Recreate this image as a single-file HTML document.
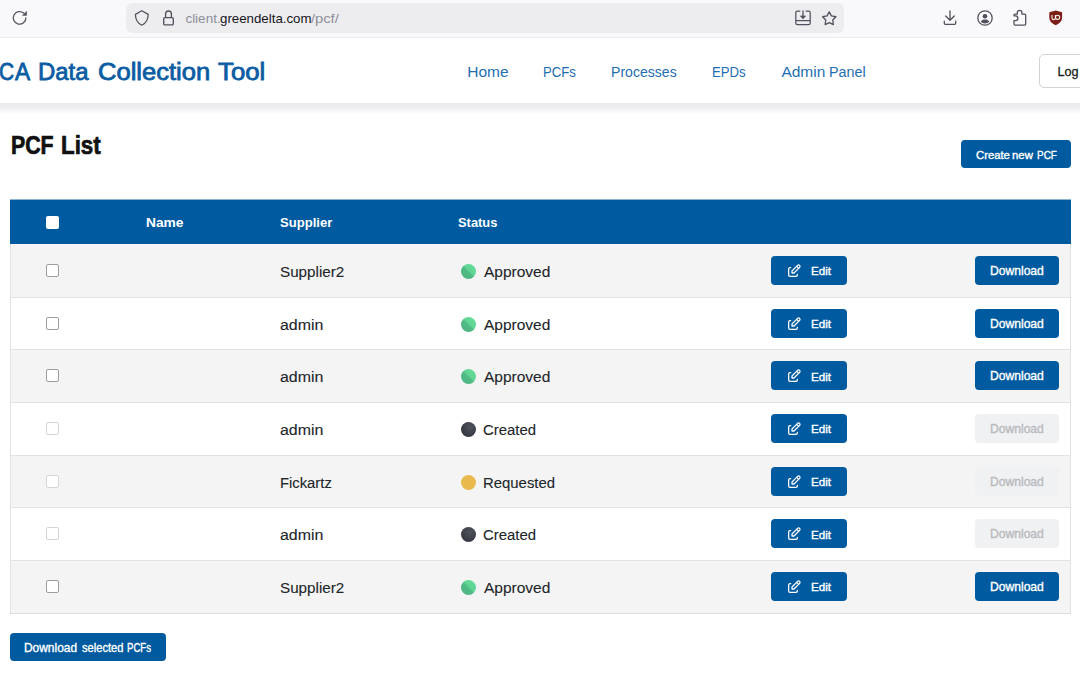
<!DOCTYPE html>
<html><head><meta charset="utf-8"><style>*{margin:0;padding:0;box-sizing:border-box}
html,body{width:1080px;height:675px;overflow:hidden;background:#fff;font-family:"Liberation Sans",sans-serif;color:#212529}
.a{position:absolute;white-space:nowrap;line-height:1}
.r{position:absolute}
svg{position:absolute;overflow:visible}
</style></head><body>
<div class="r" style="left:0;top:0;width:1080px;height:37px;background:#f9f9fb"></div>
<div class="r" style="left:0;top:37px;width:1080px;height:1px;background:#ebebee"></div>
<div class="r" style="left:126px;top:3px;width:718px;height:30px;background:#ededf0;border-radius:6px"></div>
<svg style="left:12px;top:10px" width="16" height="16" viewBox="0 0 16 16"><path d="M13.9 7.9A6.3 6.3 0 1 1 11.65 3.07" fill="none" stroke="#52525e" stroke-width="1.3" stroke-linecap="round"/><path d="M14.6 1.3L14.6 5.4L10.5 5.4Z" fill="#52525e" stroke="#52525e" stroke-width="0.5" stroke-linejoin="round"/></svg>
<svg style="left:135px;top:10px" width="14" height="16" viewBox="0 0 14 16"><path d="M6.8 0.7L13.2 4.4C13.1 9.4 10.8 13.2 6.8 15.2C2.8 13.2 0.5 9.4 0.4 4.4Z" fill="none" stroke="#52525e" stroke-width="1.25" stroke-linejoin="round"/></svg>
<svg style="left:163px;top:10px" width="12" height="16" viewBox="0 0 12 16"><path d="M2.6 7.6V3.9A2.9 2.9 0 0 1 8.4 3.9V7.6" fill="none" stroke="#52525e" stroke-width="1.35"/><rect x="0.7" y="7.6" width="9.6" height="7.3" rx="1.2" fill="none" stroke="#52525e" stroke-width="1.35"/></svg>
<div class="a" style="left:185.39px;top:12.13px;font-size:13.50px;color:#8d8d99;">client.</div>

<div class="a" style="left:220.07px;top:12.13px;font-size:13.50px;color:#15141a;transform:scaleX(0.9837);transform-origin:0 0;">greendelta.com</div>

<div class="a" style="left:311.30px;top:12.13px;font-size:13.50px;color:#8d8d99;transform:scaleX(1.0885);transform-origin:0 0;">/pcf/</div>

<svg style="left:795px;top:10px" width="16" height="16" viewBox="0 0 16 16"><path d="M5.3 1H2.4A1.6 1.6 0 0 0 0.8 2.6V13A1.6 1.6 0 0 0 2.4 14.6H13.6A1.6 1.6 0 0 0 15.2 13V2.6A1.6 1.6 0 0 0 13.6 1H10.6" fill="none" stroke="#52525e" stroke-width="1.25"/><path d="M0.8 10.6H15.2" stroke="#52525e" stroke-width="1.25"/><path d="M8 0.4V6.5" stroke="#52525e" stroke-width="1.3"/><path d="M5.3 5.9H10.7L8 8.9Z" fill="#52525e" stroke="#52525e" stroke-width="0.6" stroke-linejoin="round"/></svg>
<svg style="left:821px;top:10px" width="17" height="16" viewBox="0 0 17 16"><path d="M8.25 1.90 L10.42 5.91 L14.91 6.74 L11.77 10.04 L12.36 14.56 L8.25 12.60 L4.14 14.56 L4.73 10.04 L1.59 6.74 L6.08 5.91Z" fill="none" stroke="#52525e" stroke-width="1.3" stroke-linejoin="round"/></svg>
<svg style="left:943px;top:10px" width="15" height="16" viewBox="0 0 15 16"><path d="M7 0.8V10.2M2.7 6L7 10.3L11.3 6" fill="none" stroke="#52525e" stroke-width="1.3" stroke-linecap="round" stroke-linejoin="round"/><path d="M1.3 11.2V13.3A1 1 0 0 0 2.3 14.3H11.7A1 1 0 0 0 12.7 13.3V11.2" fill="none" stroke="#52525e" stroke-width="1.3" stroke-linecap="round"/></svg>
<svg style="left:977px;top:10px" width="16" height="16" viewBox="0 0 16 16"><circle cx="8" cy="8" r="7.2" fill="none" stroke="#52525e" stroke-width="1.3"/><circle cx="8" cy="6.2" r="2.3" fill="#52525e"/><path d="M3.8 11.8C4.6 10.2 6 9.6 8 9.6C10 9.6 11.4 10.2 12.2 11.8C11 13 9.6 13.5 8 13.5C6.4 13.5 5 13 3.8 11.8Z" fill="#52525e"/></svg>
<svg style="left:1013px;top:10px" width="14" height="16" viewBox="0 0 14 16"><path d="M2 4.1H4.3V2.6A2.3 2.3 0 0 1 8.9 2.6V4.1H11.6A1.1 1.1 0 0 1 12.7 5.2V14A1.1 1.1 0 0 1 11.6 15.1H2.1A1.1 1.1 0 0 1 1 14V10.6H2.5A2.4 2.4 0 0 0 2.5 5.8H1V5.1A1 1 0 0 1 2 4.1Z" fill="none" stroke="#52525e" stroke-width="1.3" stroke-linejoin="round"/></svg>
<svg style="left:1049px;top:10px" width="14" height="16" viewBox="0 0 14 16"><path d="M0.3 2.3L6.7 0.4L13.1 2.3V7.6C13.1 11 10.6 13.6 6.7 15.2C2.8 13.6 0.3 11 0.3 7.6Z" fill="#7b1e13"/><path d="M3 5V7.9A1.7 1.7 0 0 0 6.4 7.9V5" fill="none" stroke="#f4eeee" stroke-width="1.1"/><circle cx="8.6" cy="7.3" r="2.1" fill="none" stroke="#f4eeee" stroke-width="1.1"/></svg>
<div class="r" style="left:0;top:103px;width:1080px;height:11px;background:linear-gradient(#e9e9ec,#ececef 30%,#f2f2f4 55%,#f9f9fa 80%,#fff)"></div>
<div class="a" style="left:-1.45px;top:60.40px;font-size:23.77px;color:#0b5ca3;-webkit-text-stroke:0.8px #0b5ca3;transform:scaleX(0.8815);transform-origin:0 0;">C</div>

<div class="a" style="left:15.09px;top:60.40px;font-size:23.77px;color:#0b5ca3;-webkit-text-stroke:0.8px #0b5ca3;transform:scaleX(0.9562);transform-origin:0 0;">A</div>

<div class="a" style="left:38.48px;top:60.40px;font-size:23.77px;color:#0b5ca3;-webkit-text-stroke:0.8px #0b5ca3;transform:scaleX(1.0073);transform-origin:0 0;">Data</div>

<div class="a" style="left:97.87px;top:60.40px;font-size:23.77px;color:#0b5ca3;-webkit-text-stroke:0.8px #0b5ca3;transform:scaleX(1.0747);transform-origin:0 0;">Collection</div>

<div class="a" style="left:217.86px;top:60.40px;font-size:23.77px;color:#0b5ca3;-webkit-text-stroke:0.8px #0b5ca3;transform:scaleX(1.0845);transform-origin:0 0;">Tool</div>

<div class="a" style="left:467.26px;top:63.92px;font-size:15.51px;color:#1f6eb1;">Home</div>

<div class="a" style="left:542.95px;top:63.92px;font-size:15.51px;color:#1f6eb1;transform:scaleX(0.8490);transform-origin:0 0;">PCFs</div>

<div class="a" style="left:610.57px;top:63.92px;font-size:15.51px;color:#1f6eb1;transform:scaleX(0.9075);transform-origin:0 0;">Processes</div>

<div class="a" style="left:711.94px;top:63.92px;font-size:15.51px;color:#1f6eb1;transform:scaleX(0.8510);transform-origin:0 0;">EPDs</div>

<div class="a" style="left:781.42px;top:63.92px;font-size:15.51px;color:#1f6eb1;">Admin</div>

<div class="a" style="left:829.25px;top:63.92px;font-size:15.51px;color:#1f6eb1;transform:scaleX(0.9258);transform-origin:0 0;">Panel</div>

<div class="r" style="left:1039.4px;top:53.6px;width:60px;height:34.4px;border:1px solid #d0d3d7;border-radius:5px;background:#fff"></div>
<div class="a" style="left:1057.44px;top:66.13px;font-size:12.61px;color:#1b1e21;-webkit-text-stroke:0.3px #1b1e21;">Log</div>

<div class="a" style="left:10.56px;top:133.14px;font-size:25.07px;color:#111;font-weight:bold;-webkit-text-stroke:0.7px #111;transform:scaleX(0.8502);transform-origin:0 0;">PCF</div>

<div class="a" style="left:61.10px;top:133.14px;font-size:25.07px;color:#111;font-weight:bold;-webkit-text-stroke:0.7px #111;transform:scaleX(0.8915);transform-origin:0 0;">List</div>

<div class="r" style="left:961px;top:140px;width:110px;height:28px;background:#005aa0;border-radius:4px"></div>
<div class="a" style="left:975.51px;top:149.85px;font-size:11.38px;color:#fff;-webkit-text-stroke:0.35px #fff;transform:scaleX(0.9909);transform-origin:0 0;">Create</div>

<div class="a" style="left:1012.04px;top:149.85px;font-size:11.38px;color:#fff;-webkit-text-stroke:0.35px #fff;">new</div>

<div class="a" style="left:1037.18px;top:149.85px;font-size:11.38px;color:#fff;-webkit-text-stroke:0.35px #fff;transform:scaleX(0.8766);transform-origin:0 0;">PCF</div>

<div class="r" style="left:10px;top:200px;width:1061px;height:44px;background:#005aa0"></div>
<div class="r" style="left:10px;top:199px;width:1061px;height:1px;background:rgba(0,90,160,.45)"></div>
<div class="r" style="left:46px;top:215.5px;width:13px;height:13px;background:#fff;border-radius:2px"></div>
<div class="a" style="left:146.40px;top:216.42px;font-size:13.62px;color:#fff;font-weight:bold;transform:scaleX(1.0123);transform-origin:0 0;">Name</div>

<div class="a" style="left:280.11px;top:216.42px;font-size:13.62px;color:#fff;font-weight:bold;transform:scaleX(0.9595);transform-origin:0 0;">Supplier</div>

<div class="a" style="left:458.21px;top:216.42px;font-size:13.62px;color:#fff;font-weight:bold;transform:scaleX(0.9468);transform-origin:0 0;">Status</div>

<div class="r" style="left:10px;top:244px;width:1px;height:369.19px;background:#e1e2e5"></div>
<div class="r" style="left:1070px;top:244px;width:1px;height:369.19px;background:#e1e2e5"></div>
<div class="r" style="left:11px;top:244.00px;width:1059px;height:52.67px;background:#f4f4f4"></div>
<div class="r" style="left:11px;top:296.67px;width:1059px;height:52.67px;background:#fff"></div>
<div class="r" style="left:11px;top:349.34px;width:1059px;height:52.67px;background:#f4f4f4"></div>
<div class="r" style="left:11px;top:402.01px;width:1059px;height:52.67px;background:#fff"></div>
<div class="r" style="left:11px;top:454.68px;width:1059px;height:52.67px;background:#f4f4f4"></div>
<div class="r" style="left:11px;top:507.35px;width:1059px;height:52.67px;background:#fff"></div>
<div class="r" style="left:11px;top:560.02px;width:1059px;height:52.67px;background:#f4f4f4"></div>
<div class="r" style="left:11px;top:296.57px;width:1059px;height:1px;background:#e2e3e6"></div>
<div class="r" style="left:11px;top:349.24px;width:1059px;height:1px;background:#e2e3e6"></div>
<div class="r" style="left:11px;top:401.91px;width:1059px;height:1px;background:#e2e3e6"></div>
<div class="r" style="left:11px;top:454.58px;width:1059px;height:1px;background:#e2e3e6"></div>
<div class="r" style="left:11px;top:507.25px;width:1059px;height:1px;background:#e2e3e6"></div>
<div class="r" style="left:11px;top:559.92px;width:1059px;height:1px;background:#e2e3e6"></div>
<div class="r" style="left:10px;top:612.59px;width:1061px;height:1px;background:#dcdde0"></div>
<div class="r" style="left:46px;top:264.00px;width:13px;height:13px;border:1px solid #9c9da1;border-radius:2px;background:#fff"></div>
<div class="a" style="left:279.86px;top:263.84px;font-size:15.07px;color:#212529;-webkit-text-stroke:0.1px #212529;transform:scaleX(1.0105);transform-origin:0 0;">Supplier2</div>

<div class="r" style="left:461px;top:264.00px;width:15px;height:15px;border-radius:50%;background:linear-gradient(45deg,#4db683 0,#4fba85 46%,#60d594 56%,#66dc9a 100%)"></div>
<div class="a" style="left:483.97px;top:263.84px;font-size:15.07px;color:#212529;-webkit-text-stroke:0.1px #212529;transform:scaleX(1.0291);transform-origin:0 0;">Approved</div>

<div class="r" style="left:771px;top:256.00px;width:76px;height:29px;background:#005aa0;border-radius:4px"></div>
<svg style="left:785.6px;top:262.90px" width="16" height="16" viewBox="0 0 24 24"><g fill="none" stroke="#fff" stroke-width="1.9" stroke-linecap="round" stroke-linejoin="round"><path d="M7 7h-1a2 2 0 0 0 -2 2v9a2 2 0 0 0 2 2h9a2 2 0 0 0 2 -2v-1"/><path d="M20.385 6.585a2.1 2.1 0 0 0 -2.97 -2.97l-8.415 8.385v3h3l8.385 -8.415z"/><path d="M16 5l3 3"/></g></svg>
<div class="a" style="left:811.14px;top:266.40px;font-size:11.09px;color:#fff;-webkit-text-stroke:0.35px #fff;transform:scaleX(1.0509);transform-origin:0 0;">Edit</div>

<div class="r" style="left:975px;top:256.00px;width:84px;height:29px;background:#005aa0;border-radius:4px"></div>
<div class="a" style="left:989.81px;top:265.86px;font-size:11.96px;color:#fff;-webkit-text-stroke:0.35px #fff;transform:scaleX(1.0124);transform-origin:0 0;">Download</div>

<div class="r" style="left:46px;top:316.67px;width:13px;height:13px;border:1px solid #9c9da1;border-radius:2px;background:#fff"></div>
<div class="a" style="left:280.13px;top:316.51px;font-size:15.07px;color:#212529;-webkit-text-stroke:0.1px #212529;transform:scaleX(1.0580);transform-origin:0 0;">admin</div>

<div class="r" style="left:461px;top:316.67px;width:15px;height:15px;border-radius:50%;background:linear-gradient(45deg,#4db683 0,#4fba85 46%,#60d594 56%,#66dc9a 100%)"></div>
<div class="a" style="left:483.97px;top:316.51px;font-size:15.07px;color:#212529;-webkit-text-stroke:0.1px #212529;transform:scaleX(1.0291);transform-origin:0 0;">Approved</div>

<div class="r" style="left:771px;top:308.67px;width:76px;height:29px;background:#005aa0;border-radius:4px"></div>
<svg style="left:785.6px;top:315.57px" width="16" height="16" viewBox="0 0 24 24"><g fill="none" stroke="#fff" stroke-width="1.9" stroke-linecap="round" stroke-linejoin="round"><path d="M7 7h-1a2 2 0 0 0 -2 2v9a2 2 0 0 0 2 2h9a2 2 0 0 0 2 -2v-1"/><path d="M20.385 6.585a2.1 2.1 0 0 0 -2.97 -2.97l-8.415 8.385v3h3l8.385 -8.415z"/><path d="M16 5l3 3"/></g></svg>
<div class="a" style="left:811.14px;top:319.07px;font-size:11.09px;color:#fff;-webkit-text-stroke:0.35px #fff;transform:scaleX(1.0509);transform-origin:0 0;">Edit</div>

<div class="r" style="left:975px;top:308.67px;width:84px;height:29px;background:#005aa0;border-radius:4px"></div>
<div class="a" style="left:989.81px;top:318.53px;font-size:11.96px;color:#fff;-webkit-text-stroke:0.35px #fff;transform:scaleX(1.0124);transform-origin:0 0;">Download</div>

<div class="r" style="left:46px;top:369.34px;width:13px;height:13px;border:1px solid #9c9da1;border-radius:2px;background:#fff"></div>
<div class="a" style="left:280.13px;top:369.18px;font-size:15.07px;color:#212529;-webkit-text-stroke:0.1px #212529;transform:scaleX(1.0580);transform-origin:0 0;">admin</div>

<div class="r" style="left:461px;top:369.34px;width:15px;height:15px;border-radius:50%;background:linear-gradient(45deg,#4db683 0,#4fba85 46%,#60d594 56%,#66dc9a 100%)"></div>
<div class="a" style="left:483.97px;top:369.18px;font-size:15.07px;color:#212529;-webkit-text-stroke:0.1px #212529;transform:scaleX(1.0291);transform-origin:0 0;">Approved</div>

<div class="r" style="left:771px;top:361.34px;width:76px;height:29px;background:#005aa0;border-radius:4px"></div>
<svg style="left:785.6px;top:368.24px" width="16" height="16" viewBox="0 0 24 24"><g fill="none" stroke="#fff" stroke-width="1.9" stroke-linecap="round" stroke-linejoin="round"><path d="M7 7h-1a2 2 0 0 0 -2 2v9a2 2 0 0 0 2 2h9a2 2 0 0 0 2 -2v-1"/><path d="M20.385 6.585a2.1 2.1 0 0 0 -2.97 -2.97l-8.415 8.385v3h3l8.385 -8.415z"/><path d="M16 5l3 3"/></g></svg>
<div class="a" style="left:811.14px;top:371.74px;font-size:11.09px;color:#fff;-webkit-text-stroke:0.35px #fff;transform:scaleX(1.0509);transform-origin:0 0;">Edit</div>

<div class="r" style="left:975px;top:361.34px;width:84px;height:29px;background:#005aa0;border-radius:4px"></div>
<div class="a" style="left:989.81px;top:371.20px;font-size:11.96px;color:#fff;-webkit-text-stroke:0.35px #fff;transform:scaleX(1.0124);transform-origin:0 0;">Download</div>

<div class="r" style="left:46px;top:422.01px;width:13px;height:13px;border:1px solid #d4d5d9;border-radius:2px;background:#fff"></div>
<div class="a" style="left:280.13px;top:421.85px;font-size:15.07px;color:#212529;-webkit-text-stroke:0.1px #212529;transform:scaleX(1.0580);transform-origin:0 0;">admin</div>

<div class="r" style="left:461px;top:422.01px;width:15px;height:15px;border-radius:50%;background:radial-gradient(circle at 60% 35%,#50535c 0,#3c3f48 55%,#2c2e35 100%)"></div>
<div class="a" style="left:483.30px;top:421.85px;font-size:15.07px;color:#212529;-webkit-text-stroke:0.1px #212529;transform:scaleX(0.9894);transform-origin:0 0;">Created</div>

<div class="r" style="left:771px;top:414.01px;width:76px;height:29px;background:#005aa0;border-radius:4px"></div>
<svg style="left:785.6px;top:420.91px" width="16" height="16" viewBox="0 0 24 24"><g fill="none" stroke="#fff" stroke-width="1.9" stroke-linecap="round" stroke-linejoin="round"><path d="M7 7h-1a2 2 0 0 0 -2 2v9a2 2 0 0 0 2 2h9a2 2 0 0 0 2 -2v-1"/><path d="M20.385 6.585a2.1 2.1 0 0 0 -2.97 -2.97l-8.415 8.385v3h3l8.385 -8.415z"/><path d="M16 5l3 3"/></g></svg>
<div class="a" style="left:811.14px;top:424.41px;font-size:11.09px;color:#fff;-webkit-text-stroke:0.35px #fff;transform:scaleX(1.0509);transform-origin:0 0;">Edit</div>

<div class="r" style="left:975px;top:414.01px;width:84px;height:29px;background:#f0f1f3;border-radius:4px"></div>
<div class="a" style="left:989.81px;top:423.87px;font-size:11.96px;color:#b9babd;-webkit-text-stroke:0.35px #b9babd;transform:scaleX(1.0124);transform-origin:0 0;">Download</div>

<div class="r" style="left:46px;top:474.68px;width:13px;height:13px;border:1px solid #d4d5d9;border-radius:2px;background:#fff"></div>
<div class="a" style="left:280.07px;top:474.52px;font-size:15.07px;color:#212529;-webkit-text-stroke:0.1px #212529;transform:scaleX(0.9824);transform-origin:0 0;">Fickartz</div>

<div class="r" style="left:461px;top:474.68px;width:15px;height:15px;border-radius:50%;background:#e8b94c"></div>
<div class="a" style="left:482.86px;top:474.52px;font-size:15.07px;color:#212529;-webkit-text-stroke:0.1px #212529;transform:scaleX(0.9888);transform-origin:0 0;">Requested</div>

<div class="r" style="left:771px;top:466.68px;width:76px;height:29px;background:#005aa0;border-radius:4px"></div>
<svg style="left:785.6px;top:473.58px" width="16" height="16" viewBox="0 0 24 24"><g fill="none" stroke="#fff" stroke-width="1.9" stroke-linecap="round" stroke-linejoin="round"><path d="M7 7h-1a2 2 0 0 0 -2 2v9a2 2 0 0 0 2 2h9a2 2 0 0 0 2 -2v-1"/><path d="M20.385 6.585a2.1 2.1 0 0 0 -2.97 -2.97l-8.415 8.385v3h3l8.385 -8.415z"/><path d="M16 5l3 3"/></g></svg>
<div class="a" style="left:811.14px;top:477.08px;font-size:11.09px;color:#fff;-webkit-text-stroke:0.35px #fff;transform:scaleX(1.0509);transform-origin:0 0;">Edit</div>

<div class="r" style="left:975px;top:466.68px;width:84px;height:29px;background:#f0f1f3;border-radius:4px"></div>
<div class="a" style="left:989.81px;top:476.54px;font-size:11.96px;color:#b9babd;-webkit-text-stroke:0.35px #b9babd;transform:scaleX(1.0124);transform-origin:0 0;">Download</div>

<div class="r" style="left:46px;top:527.35px;width:13px;height:13px;border:1px solid #d4d5d9;border-radius:2px;background:#fff"></div>
<div class="a" style="left:280.13px;top:527.19px;font-size:15.07px;color:#212529;-webkit-text-stroke:0.1px #212529;transform:scaleX(1.0580);transform-origin:0 0;">admin</div>

<div class="r" style="left:461px;top:527.35px;width:15px;height:15px;border-radius:50%;background:radial-gradient(circle at 60% 35%,#50535c 0,#3c3f48 55%,#2c2e35 100%)"></div>
<div class="a" style="left:483.30px;top:527.19px;font-size:15.07px;color:#212529;-webkit-text-stroke:0.1px #212529;transform:scaleX(0.9894);transform-origin:0 0;">Created</div>

<div class="r" style="left:771px;top:519.35px;width:76px;height:29px;background:#005aa0;border-radius:4px"></div>
<svg style="left:785.6px;top:526.25px" width="16" height="16" viewBox="0 0 24 24"><g fill="none" stroke="#fff" stroke-width="1.9" stroke-linecap="round" stroke-linejoin="round"><path d="M7 7h-1a2 2 0 0 0 -2 2v9a2 2 0 0 0 2 2h9a2 2 0 0 0 2 -2v-1"/><path d="M20.385 6.585a2.1 2.1 0 0 0 -2.97 -2.97l-8.415 8.385v3h3l8.385 -8.415z"/><path d="M16 5l3 3"/></g></svg>
<div class="a" style="left:811.14px;top:529.75px;font-size:11.09px;color:#fff;-webkit-text-stroke:0.35px #fff;transform:scaleX(1.0509);transform-origin:0 0;">Edit</div>

<div class="r" style="left:975px;top:519.35px;width:84px;height:29px;background:#f0f1f3;border-radius:4px"></div>
<div class="a" style="left:989.81px;top:529.21px;font-size:11.96px;color:#b9babd;-webkit-text-stroke:0.35px #b9babd;transform:scaleX(1.0124);transform-origin:0 0;">Download</div>

<div class="r" style="left:46px;top:580.02px;width:13px;height:13px;border:1px solid #9c9da1;border-radius:2px;background:#fff"></div>
<div class="a" style="left:279.86px;top:579.86px;font-size:15.07px;color:#212529;-webkit-text-stroke:0.1px #212529;transform:scaleX(1.0105);transform-origin:0 0;">Supplier2</div>

<div class="r" style="left:461px;top:580.02px;width:15px;height:15px;border-radius:50%;background:linear-gradient(45deg,#4db683 0,#4fba85 46%,#60d594 56%,#66dc9a 100%)"></div>
<div class="a" style="left:483.97px;top:579.86px;font-size:15.07px;color:#212529;-webkit-text-stroke:0.1px #212529;transform:scaleX(1.0291);transform-origin:0 0;">Approved</div>

<div class="r" style="left:771px;top:572.02px;width:76px;height:29px;background:#005aa0;border-radius:4px"></div>
<svg style="left:785.6px;top:578.92px" width="16" height="16" viewBox="0 0 24 24"><g fill="none" stroke="#fff" stroke-width="1.9" stroke-linecap="round" stroke-linejoin="round"><path d="M7 7h-1a2 2 0 0 0 -2 2v9a2 2 0 0 0 2 2h9a2 2 0 0 0 2 -2v-1"/><path d="M20.385 6.585a2.1 2.1 0 0 0 -2.97 -2.97l-8.415 8.385v3h3l8.385 -8.415z"/><path d="M16 5l3 3"/></g></svg>
<div class="a" style="left:811.14px;top:582.42px;font-size:11.09px;color:#fff;-webkit-text-stroke:0.35px #fff;transform:scaleX(1.0509);transform-origin:0 0;">Edit</div>

<div class="r" style="left:975px;top:572.02px;width:84px;height:29px;background:#005aa0;border-radius:4px"></div>
<div class="a" style="left:989.81px;top:581.88px;font-size:11.96px;color:#fff;-webkit-text-stroke:0.35px #fff;transform:scaleX(1.0124);transform-origin:0 0;">Download</div>

<div class="r" style="left:10px;top:632.5px;width:156px;height:28.5px;background:#005aa0;border-radius:4px"></div>
<div class="a" style="left:24.22px;top:642.04px;font-size:12.10px;color:#fff;-webkit-text-stroke:0.35px #fff;transform:scaleX(0.9868);transform-origin:0 0;">Download</div>

<div class="a" style="left:81.54px;top:642.04px;font-size:12.10px;color:#fff;-webkit-text-stroke:0.35px #fff;transform:scaleX(0.9208);transform-origin:0 0;">selected</div>

<div class="a" style="left:126.91px;top:642.04px;font-size:12.10px;color:#fff;-webkit-text-stroke:0.35px #fff;transform:scaleX(0.7952);transform-origin:0 0;">PCFs</div>

</body></html>
